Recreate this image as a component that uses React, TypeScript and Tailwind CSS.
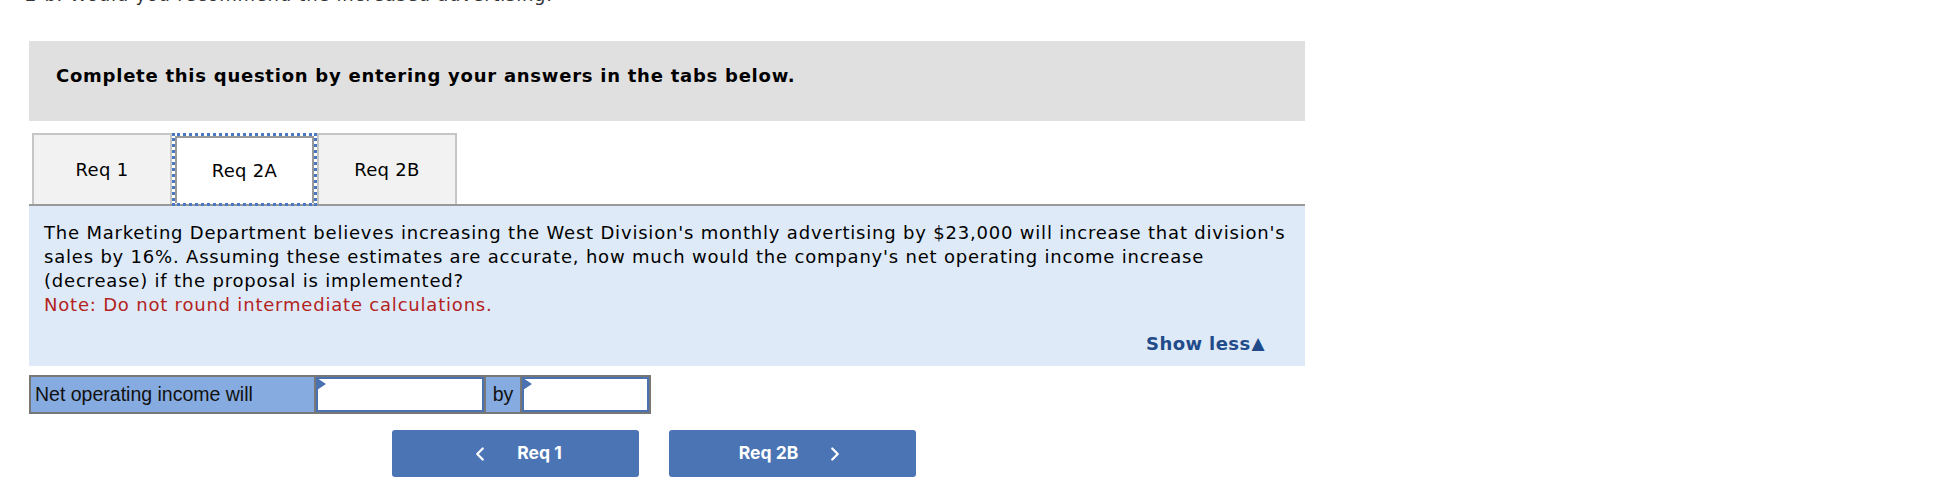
import { ChevronLeft, ChevronRight } from "lucide-react";

const verdana = "font-['DejaVu_Sans',Verdana,sans-serif]";

function Tab({ label, active }: { label: string; active?: boolean }) {
    if (active) {
        return (
            <div className="h-[73px] w-[145px] border-[3px] border-dotted border-[#4a78c2] -mb-[2px] relative z-10">
                <div className="h-full w-full border-2 border-b-0 border-[#999] bg-white flex items-center justify-center text-[18px] tracking-[0.3px] text-black">
                    {label}
                </div>
            </div>
        );
    }
    return (
        <div className="h-[71px] w-[140px] border-2 border-b-0 border-[#c6c6c6] bg-[#f2f2f2] flex items-center justify-center text-[18px] tracking-[0.3px] text-black">
            {label}
        </div>
    );
}

function AnswerInput({ width }: { width: string }) {
    return (
        <div className={`relative h-full border-2 border-[#4a72b0] bg-white ${width}`}>
            <svg className="absolute -left-[1px] -top-[1px]" width="9" height="12" viewBox="0 0 9 12">
                <polygon points="0,0 9,6 0,12" fill="#4a72b0" />
            </svg>
        </div>
    );
}

export default function App() {
    return (
        <div className={`w-[1958px] h-[494px] overflow-hidden bg-white ${verdana}`}>
            <p className="-mt-[17px] ml-[25px] text-[18px] tracking-[0.75px] leading-[24px] text-[#333]">
                2-b. Would you recommend the increased advertising.
            </p>

            <div className="ml-[29px] w-[1276px] mt-[34px]">
                {/* instructions */}
                <div className="h-[80px] bg-[#e0e0e0] pl-[27px] pt-[21px]">
                    <p className="text-[18px] tracking-[0.75px] font-bold text-black">
                        Complete this question by entering your answers in the tabs below.
                    </p>
                </div>

                {/* tabs */}
                <div className="mt-[12px] flex items-end pl-[3px] border-b-2 border-[#999]">
                    <Tab label="Req 1" />
                    <Tab label="Req 2A" active />
                    <Tab label="Req 2B" />
                </div>

                {/* question */}
                <div className="bg-[#deeaf7] h-[160px] pl-[15px] pt-[15px] flex flex-col">
                    <p className="text-[18px] tracking-[0.8px] leading-[24px] text-black pr-[15px]">
                        The Marketing Department believes increasing the West Division's monthly advertising by $23,000 will increase that division's sales by 16%. Assuming these estimates are accurate, how much would the company's net operating income increase (decrease) if the proposal is implemented?
                    </p>
                    <p className="text-[18px] tracking-[0.8px] leading-[24px] text-[#b3231e]">
                        Note: Do not round intermediate calculations.
                    </p>
                    <div className="mt-auto mb-[9px] pr-[40px] flex justify-end items-center text-[18px] tracking-[0.4px] font-bold text-[#1f4b8a]">
                        Show less<span className="text-[17px] ml-[1px]">▲</span>
                    </div>
                </div>

                {/* answer row */}
                <div className="mt-[9px] h-[39px] w-[622px] border-2 border-[#777] flex font-['Liberation_Sans',Arial,sans-serif] text-[19.5px] text-[#111]">
                    <div className="w-[285px] h-full bg-[#86abe0] flex items-center pl-[4px] border-r-2 border-[#777]">
                        Net operating income will
                    </div>
                    <AnswerInput width="w-[168px]" />
                    <div className="w-[38px] h-full bg-[#86abe0] flex items-center justify-center border-x-2 border-[#777]">
                        by
                    </div>
                    <AnswerInput width="w-[127px]" />
                </div>

                {/* navigation */}
                <div className="mt-[16px] ml-[363px] flex gap-[30px] font-['Inter',sans-serif] text-[17.5px] font-bold text-white">
                    <button className="w-[247px] h-[47px] rounded-[3px] bg-[#4a74b4] flex items-center justify-center gap-[26px]">
                        <ChevronLeft size={22} strokeWidth={2.5} />
                        <span>Req 1</span>
                    </button>
                    <button className="w-[247px] h-[47px] rounded-[3px] bg-[#4a74b4] flex items-center justify-center gap-[26px]">
                        <span>Req 2B</span>
                        <ChevronRight size={22} strokeWidth={2.5} />
                    </button>
                </div>
            </div>
        </div>
    );
}
